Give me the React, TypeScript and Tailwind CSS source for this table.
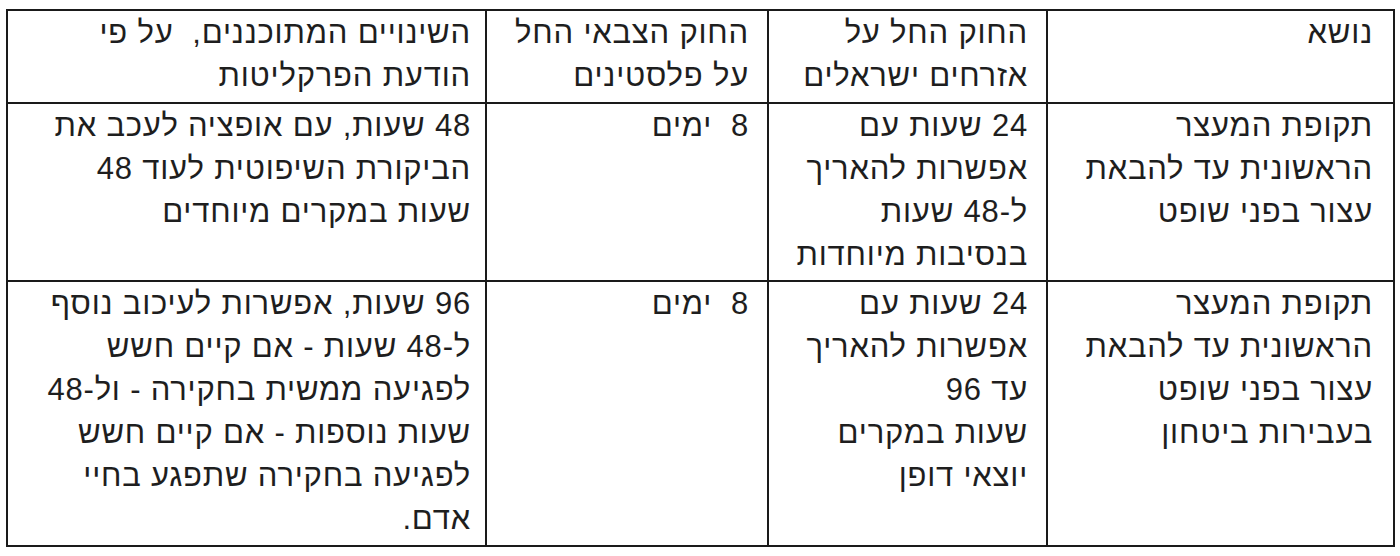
const header = [
  ['נושא'],
  ['החוק החל על', 'אזרחים ישראלים'],
  ['החוק הצבאי החל', 'על פלסטינים'],
  ['השינויים המתוכננים,\u00a0 על פי', 'הודעת הפרקליטות'],
]

const rows = [
  [
    ['תקופת המעצר', 'הראשונית עד להבאת', 'עצור בפני שופט'],
    ['24 שעות עם', 'אפשרות להאריך', 'ל-48 שעות', 'בנסיבות מיוחדות'],
    ['8\u00a0 ימים'],
    ['48 שעות, עם אופציה לעכב את', 'הביקורת השיפוטית לעוד 48', 'שעות במקרים מיוחדים'],
  ],
  [
    ['תקופת המעצר', 'הראשונית עד להבאת', 'עצור בפני שופט', 'בעבירות ביטחון'],
    ['24 שעות עם', 'אפשרות להאריך', 'עד 96', 'שעות במקרים', 'יוצאי דופן'],
    ['8\u00a0 ימים'],
    [
      '96 שעות, אפשרות לעיכוב נוסף',
      'ל-48 שעות - אם קיים חשש',
      'לפגיעה ממשית בחקירה - ול-48',
      'שעות נוספות - אם קיים חשש',
      'לפגיעה בחקירה שתפגע בחיי',
      'אדם.',
    ],
  ],
]

const widths = ['w-[347px] pr-[20px]', 'w-[279px] pr-[18px]', 'w-[282px] pr-[18px]', 'w-[479px] pr-[14px]']

function Cell({ lines, w }: { lines: string[]; w: string }) {
  return (
    <td className={`${w} border-2 border-[#1a1a1a] align-top pl-2 py-0 text-right`}>
      {lines.map((l, i) => (
        <div key={i} className="whitespace-nowrap leading-[43px]">{l}</div>
      ))}
    </td>
  )
}

export default function App() {
  return (
    <div className="w-[1400px] h-[556px] bg-white pt-[9px] pl-[6px] font-['Liberation_Sans','DejaVu_Sans',sans-serif]">
      <table dir="rtl" className="border-collapse text-[31px] tracking-[0.8px] text-[#1e1e1e] table-fixed w-[1387px]">
        <tbody>
          <tr className="h-[93px]">
            {header.map((c, i) => <Cell key={i} lines={c} w={widths[i]} />)}
          </tr>
          {rows.map((r, ri) => (
            <tr key={ri} className={ri === 0 ? 'h-[178px]' : 'h-[265px]'}>
              {r.map((c, i) => <Cell key={i} lines={c} w={widths[i]} />)}
            </tr>
          ))}
        </tbody>
      </table>
    </div>
  )
}
